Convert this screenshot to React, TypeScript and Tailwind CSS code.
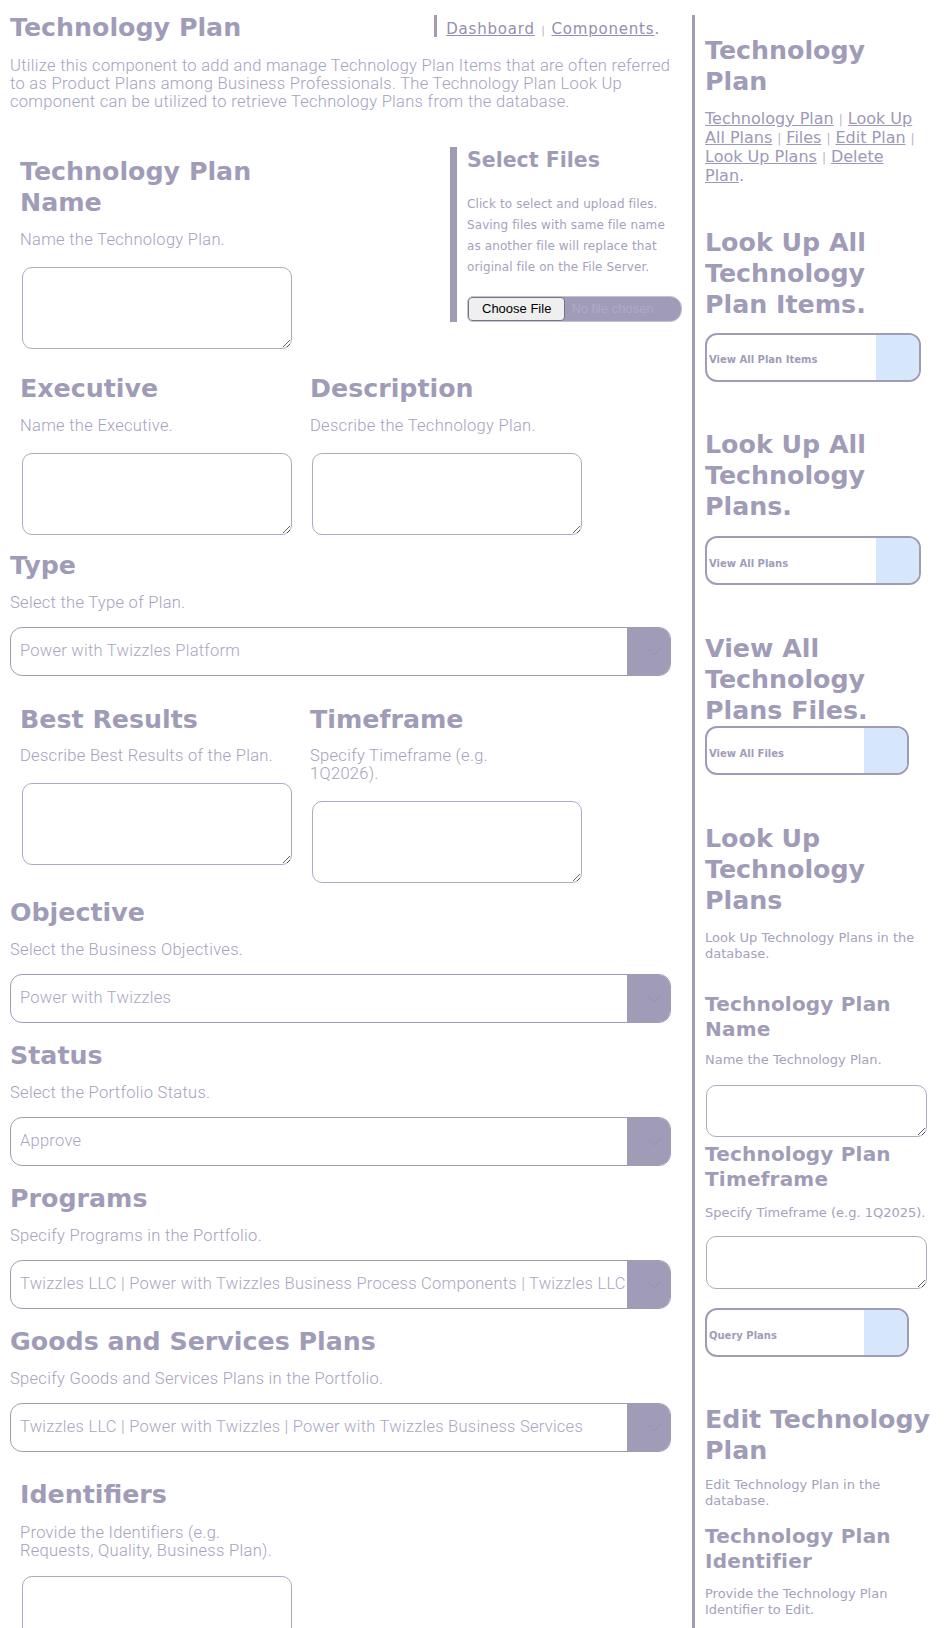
const verdana = "font-['DejaVu_Sans',sans-serif]";
const light = "font-['Roboto',sans-serif] font-light";

function Heading({ children, className = "" }: { children: React.ReactNode; className?: string }) {
  return (
    <h2 className={`${verdana} text-[25.3px] font-bold leading-[31px] text-[#a09cb8] ${className}`}>
      {children}
    </h2>
  );
}

function Desc({ children, className = "" }: { children: React.ReactNode; className?: string }) {
  return (
    <p className={`${light} text-[16.5px] leading-[18px] tracking-[0.3px] text-[#a5a2bd] ${className}`}>
      {children}
    </p>
  );
}

function Box({ className = "" }: { className?: string }) {
  return (
    <textarea
      className={`block rounded-[10px] border border-[#aeaac4] bg-white p-[2px] ${className}`}
    />
  );
}

function TextField({
  title,
  desc,
  className = "",
}: {
  title: React.ReactNode;
  desc: React.ReactNode;
  className?: string;
}) {
  return (
    <div className={`w-[290px] shrink-0 px-[10px] ${className}`}>
      <Heading>{title}</Heading>
      <Desc className="mt-[12.5px]">{desc}</Desc>
      <Box className="mt-[18px] ml-[2px] h-[82px] w-[270px]" />
    </div>
  );
}

function SelectBox({ value }: { value: string }) {
  return (
    <div className="mt-[15.5px] flex h-[49px] w-[661px] overflow-hidden rounded-[12px] border border-[#a09cb8] bg-white">
      <div className="flex min-w-0 flex-1 items-center overflow-hidden pl-[9px]">
        <span className={`${light} whitespace-nowrap text-[16.5px] tracking-[0.25px] text-[#a9a6c1]`}>
          {value}
        </span>
      </div>
      <div className="flex w-[43px] shrink-0 items-center justify-center bg-[#a09cb8] pl-[10px]">
        <svg width="16" height="10" viewBox="0 0 16 10" fill="none">
          <polyline points="1,1 8,8 15,1" stroke="#9591af" strokeWidth="1" />
        </svg>
      </div>
    </div>
  );
}

function SelectField({ title, desc, value, className = "" }: { title: string; desc: string; value: string; className?: string }) {
  return (
    <div className={className}>
      <Heading>{title}</Heading>
      <Desc className="mt-[12.5px]">{desc}</Desc>
      <SelectBox value={value} />
    </div>
  );
}

function SideHeading({ children, className = "" }: { children: React.ReactNode; className?: string }) {
  return (
    <h2 className={`${verdana} text-[25.3px] font-bold leading-[31px] text-[#a09cb8] ${className}`}>
      {children}
    </h2>
  );
}

function SideSub({ children, className = "" }: { children: React.ReactNode; className?: string }) {
  return (
    <h3 className={`${verdana} text-[20px] font-bold leading-[25px] tracking-[0.2px] text-[#a09cb8] ${className}`}>
      {children}
    </h3>
  );
}

function SideText({ children, className = "" }: { children: React.ReactNode; className?: string }) {
  return (
    <p className={`${verdana} text-[13px] leading-[16px] text-[#a5a2bd] ${className}`}>{children}</p>
  );
}

function SideButton({ label, wide = true, className = "" }: { label: string; wide?: boolean; className?: string }) {
  return (
    <button
      className={`flex h-[49px] overflow-hidden rounded-[12px] border-2 border-[#a09cb8] bg-white p-0 ${
        wide ? "w-[216px]" : "w-[204px]"
      } ${className}`}
    >
      <span
        className={`${verdana} flex flex-1 items-center pl-[2px] pt-[5px] text-left text-[10px] font-bold text-[#a09cb8]`}
      >
        {label}
      </span>
      <span className="w-[43px] shrink-0 bg-[#d6e7fc]" />
    </button>
  );
}

function Sep() {
  return <span className="mx-[5px] text-[12px] text-[#b7b4ca]">|</span>;
}

function SideLink({ children }: { children: React.ReactNode }) {
  return (
    <a href="#" className="text-[#9d99b6] underline">
      {children}
    </a>
  );
}

export default function App() {
  return (
    <div className="h-[1628px] overflow-hidden bg-white">
      <div className="flex items-start">
        <main className="w-[692px] shrink-0 px-[10px] pt-[12px]">
          <div className="flex items-start">
            <h1 className={`${verdana} text-[25.3px] font-bold leading-[31px] text-[#a09cb8]`}>
              Technology Plan
            </h1>
            <div className="ml-auto mr-[22px] mt-[3px] flex items-start">
              <span className="h-[22px] w-[3px] bg-[#a09cb8]" />
              <span
                className={`${verdana} ml-[9px] mt-[3px] text-[15px] leading-[22px] tracking-[0.8px] text-[#948fae]`}
              >
                <a href="#" className="underline">Dashboard</a>
                <span className="mx-[6.5px] text-[11px] tracking-normal text-[#b7b4ca]">|</span>
                <a href="#" className="underline">Components</a>.
              </span>
            </div>
          </div>

          <Desc className="mt-[14px] whitespace-nowrap">
            Utilize this component to add and manage Technology Plan Items that are often referred
            <br />
            to as Product Plans among Business Professionals. The Technology Plan Look Up
            <br />
            component can be utilized to retrieve Technology Plans from the database.
          </Desc>

          <div className="mt-[36px] flex items-start">
            <TextField className="pt-[9px]" title="Technology Plan Name" desc="Name the Technology Plan." />
            <div className="ml-auto w-[232px] border-l-[7px] border-[#a09cb8] pl-[10px]">
              <h3 className={`${verdana} text-[20.5px] font-bold leading-[26px] text-[#a09cb8]`}>
                Select Files
              </h3>
              <p className={`${verdana} mt-[21px] text-[12px] leading-[21px] tracking-[0.1px] text-[#a5a2bd]`}>
                Click to select and upload files. Saving files with same file name as another file will replace
                that original file on the File Server.
              </p>
              <div className="mt-[18px] flex h-[26px] w-[215px] overflow-hidden rounded-l-[6px] rounded-r-[12px] border border-[#c4c1d6] bg-[#a09cb8]">
                <span className="flex items-center rounded-[4px] border border-[#767676] bg-[#efefef] px-[13px] font-['Liberation_Sans',sans-serif] text-[13px] text-black">
                  Choose File
                </span>
                <span className="flex items-center pl-[6px] font-['Liberation_Sans',sans-serif] text-[13px] text-[#aeabc8]">
                  No file chosen
                </span>
              </div>
            </div>
          </div>

          <div className="mt-[24.5px] flex items-start">
            <TextField title="Executive" desc="Name the Executive." />
            <TextField title="Description" desc="Describe the Technology Plan." />
          </div>

          <SelectField
            className="mt-[15.5px]"
            title="Type"
            desc="Select the Type of Plan."
            value="Power with Twizzles Platform"
          />

          <div className="mt-[27.7px] flex items-start">
            <TextField title="Best Results" desc="Describe Best Results of the Plan." />
            <TextField
              title="Timeframe"
              desc={
                <>
                  Specify Timeframe (e.g.
                  <br />
                  1Q2026).
                </>
              }
            />
          </div>

          <SelectField
            className="mt-[14px]"
            title="Objective"
            desc="Select the Business Objectives."
            value="Power with Twizzles"
          />
          <SelectField className="mt-[17px]" title="Status" desc="Select the Portfolio Status." value="Approve" />
          <SelectField
            className="mt-[17px]"
            title="Programs"
            desc="Specify Programs in the Portfolio."
            value="Twizzles LLC | Power with Twizzles Business Process Components | Twizzles LLC | Power with Twizzles"
          />
          <SelectField
            className="mt-[17px]"
            title="Goods and Services Plans"
            desc="Specify Goods and Services Plans in the Portfolio."
            value="Twizzles LLC | Power with Twizzles | Power with Twizzles Business Services"
          />

          <div className="mt-[27px] flex items-start">
            <div className="w-[290px] shrink-0 px-[10px]">
              <Heading>Identifiers</Heading>
              <Desc className="mt-[13.5px]">
                Provide the Identifiers (e.g.
                <br />
                Requests, Quality, Business Plan).
              </Desc>
              <Box className="mt-[16.5px] ml-[2px] h-[82px] w-[270px]" />
            </div>
          </div>
        </main>

        <aside className="mt-[15px] min-h-[1613px] w-[241px] shrink-0 border-l-[3px] border-[#a09cb8] pl-[10px] pt-[20px]">
          <SideHeading>Technology Plan</SideHeading>
          <p className={`${verdana} mt-[12.5px] whitespace-nowrap text-[16px] leading-[18px] text-[#9d99b6]`}>
            <SideLink>Technology Plan</SideLink>
            <Sep />
            <SideLink>
              Look Up
              <br />
              All Plans
            </SideLink>
            <Sep />
            <SideLink>Files</SideLink>
            <Sep />
            <SideLink>Edit Plan</SideLink>
            <Sep />
            <br />
            <SideLink>Look Up Plans</SideLink>
            <Sep />
            <SideLink>
              Delete
              <br />
              Plan
            </SideLink>
            .
          </p>

          <SideHeading className="mt-[42px]">Look Up All Technology Plan Items.</SideHeading>
          <SideButton className="mt-[13px]" label="View All Plan Items" />

          <SideHeading className="mt-[47.3px]">Look Up All Technology Plans.</SideHeading>
          <SideButton className="mt-[14.7px]" label="View All Plans" />

          <SideHeading className="mt-[48px]">View All Technology Plans Files.</SideHeading>
          <SideButton label="View All Files" wide={false} />

          <SideHeading className="mt-[48px]">Look Up Technology Plans</SideHeading>
          <SideText className="mt-[13.5px]">Look Up Technology Plans in the database.</SideText>
          <SideSub className="mt-[30px]">Technology Plan Name</SideSub>
          <SideText className="mt-[10.5px]">Name the Technology Plan.</SideText>
          <Box className="mt-[17px] ml-[1px] h-[52px] w-[221px]" />
          <SideSub className="mt-[5px]">Technology Plan Timeframe</SideSub>
          <SideText className="mt-[12.5px] whitespace-nowrap">Specify Timeframe (e.g. 1Q2025).</SideText>
          <Box className="mt-[15.5px] ml-[1px] h-[53px] w-[221px]" />
          <SideButton className="mt-[19px]" label="Query Plans" wide={false} />

          <SideHeading className="mt-[46.5px]">Edit Technology Plan</SideHeading>
          <SideText className="mt-[11.5px]">Edit Technology Plan in the database.</SideText>
          <SideSub className="mt-[15px]">Technology Plan Identifier</SideSub>
          <SideText className="mt-[12px]">Provide the Technology Plan Identifier to Edit.</SideText>
          <Box className="mt-[17px] ml-[1px] h-[52px] w-[221px]" />
        </aside>
      </div>
    </div>
  );
}
